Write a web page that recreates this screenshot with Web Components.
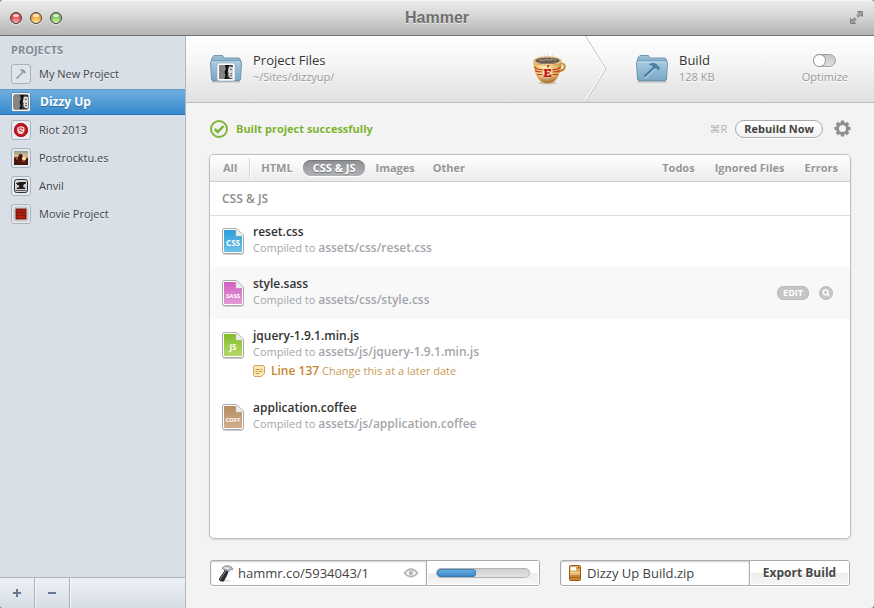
<!DOCTYPE html>
<html lang="en">
<head>
<meta charset="utf-8">
<title>Hammer</title>
<style>
  html, body { height: 100%; }
  body {
    margin: 0;
    background: #8d8d8d;
    font-family: "Open Sans", "Noto Sans", sans-serif;
    font-size: 11px;
    line-height: 16px;
    color: #444;
  }
</style>
</head>
<body>
<hammer-app></hammer-app>

<script>
const RESET = `
  *, *::before, *::after { box-sizing: border-box; }
  button, input { font: inherit; color: inherit; margin: 0; padding: 0; border: 0; background: none; outline: none; }
  button { cursor: pointer; }
  svg { display: block; flex: none; }
`;

function define(name, html, setup) {
  const template = document.createElement('template');
  template.innerHTML = html.replace('<style>', '<style>' + RESET);
  customElements.define(name, class extends HTMLElement {
    constructor() {
      super();
      this.attachShadow({ mode: 'open' }).append(template.content.cloneNode(true));
    }
    connectedCallback() { if (setup) setup(this, this.shadowRoot); }
  });
}

const portrait = `
  <rect x="0" y="0" width="14" height="14" rx="1" fill="#3b3b3b"/>
  <rect x="0" y="0" width="7" height="14" fill="#858585"/>
  <path d="M6 0h4L8.500 3l1 2-1.500 2 .5 2L7.500 11l1 3H5.500l1-4-1-3 1.500-3z" fill="#0c0c0c"/>
  <path d="M10.500 1.500C9 3 9.500 5 8.800 7l.9 1-.4 2.500 1.700 2.500 3 .5V2z" fill="#d9d9d9"/>
  <path d="M11 4.500l2-.4M11.500 8.500l1.500.2M11 10.500l2 .3" stroke="#4a4a4a" stroke-width=".9" fill="none"/>`;

const icons = {
  hammer: `
    <svg width="20" height="20" viewBox="0 0 20 20">
      <rect x=".5" y=".5" width="19" height="19" rx="2.500" fill="#dfe5eb" stroke="#a9b3be"/>
      <path d="M5.500 14.500L12.300 7.700" stroke="#8496a8" stroke-width="1.400" fill="none"/>
      <path d="M8.500 5.800c1.500-.9 3.200-.9 4.600.2l2 2.400-1.200 1.100-1.200-1.300-1.200.2-1-1.300c-.6-.6-1.300-.9-2-1z" fill="#8496a8"/>
    </svg>`,
  portrait: `
    <svg width="20" height="20" viewBox="0 0 20 20">
      <rect x=".5" y=".5" width="19" height="19" rx="2.500" fill="#f3f3f3" stroke="#5b8cb5"/>
      <rect x="1" y="1" width="18" height="18" rx="2" fill="#f6f6f6"/>
      <rect x="2.500" y="2.500" width="15" height="15" rx="1.500" fill="#222"/>
      <g transform="translate(3 3)">${portrait}</g>
    </svg>`,
  riot: `
    <svg width="20" height="20" viewBox="0 0 20 20">
      <rect x=".5" y=".5" width="19" height="19" rx="2.500" fill="#e8ecf0" stroke="#a9b3be"/>
      <circle cx="10" cy="10" r="7" fill="#c41623"/>
      <circle cx="10" cy="10" r="6.500" fill="none" stroke="#9a0d19" stroke-width=".8"/>
      <path d="M7.500 13.500l-1.300-2.300V8l1-1h1.200l.6-.8h1.600l.6.6h1.300l1 1.200v2.800l-1.500 2.700-2 .8z" fill="#f3dcdc"/>
      <path d="M8.200 7.500v1.800M10 7.200v2M11.700 8l-.2 1.500M8 10.700h2.200l1.300 1.300" stroke="#c41623" stroke-width="1" fill="none"/>
    </svg>`,
  sunset: `
    <svg width="20" height="20" viewBox="0 0 20 20">
      <defs><linearGradient id="s" x1="0" x2="0" y1="0" y2="1">
        <stop offset="0" stop-color="#8d968f"/><stop offset=".35" stop-color="#d8c29a"/>
        <stop offset=".6" stop-color="#a14a28"/><stop offset="1" stop-color="#2b0d09"/>
      </linearGradient></defs>
      <rect x=".5" y=".5" width="19" height="19" rx="2.500" fill="#e3e8ed" stroke="#a9b3be"/>
      <rect x="3" y="3" width="14" height="14" rx="1" fill="url(#s)"/>
      <path d="M3 10l2-1 2 1.500V9l1.500-3 2.500.2L12 9.500l1 1.500 4-1V17H3z" fill="#4a170f"/>
      <circle cx="13" cy="10.500" r="2" fill="#ffe3a8"/>
      <path d="M4.500 11l1.500-1 1 2zM9.500 14l3-1.500 2.500.500z" fill="#d9763f"/>
    </svg>`,
  anvil: `
    <svg width="20" height="20" viewBox="0 0 20 20">
      <rect x=".5" y=".5" width="19" height="19" rx="2.500" fill="#e8ecf0" stroke="#a9b3be"/>
      <rect x="3.500" y="3.500" width="13" height="13" rx="2" fill="#d6d6d6" stroke="#2f2f2f"/>
      <path d="M5 6.700h2.500V6h7.500v1.500c-1 .2-2 .6-2.500 1.500-.4 1-.3 1.700.3 2.500h1.400V13H5.800v-1.500h1.800c.7-.8.700-1.400.4-2C6.500 9.200 5.300 8.200 5 6.700z" fill="#1c1c1c"/>
      <path d="M4.500 14.500h11" stroke="#555"/>
    </svg>`,
  movie: `
    <svg width="20" height="20" viewBox="0 0 20 20">
      <rect x=".5" y=".5" width="19" height="19" rx="2.500" fill="#e8ecf0" stroke="#a9b3be"/>
      <rect x="3" y="3" width="14" height="14" rx="2" fill="#e9e6e4" stroke="#a5a9ae" stroke-width=".7"/>
      <rect x="5" y="5" width="10" height="10" fill="#b32210" stroke="#651108"/>
      <path d="M5 8.500h10M5 11.500h10M9.500 5v3.500M11.500 8.500v3" stroke="#7b1409" stroke-width=".8"/>
    </svg>`
};

const folder = inner => `
  <svg width="34" height="30" viewBox="0 0 34 30">
    <defs>
      <linearGradient id="f" x1="0" x2="0" y1="0" y2="1"><stop offset="0" stop-color="#a9cbe0"/><stop offset="1" stop-color="#77a7c6"/></linearGradient>
      <linearGradient id="b" x1="0" x2="0" y1="0" y2="1"><stop offset="0" stop-color="#9ec2d8"/><stop offset="1" stop-color="#7fa9c4"/></linearGradient>
    </defs>
    <path d="M3 27.800h28" stroke="#b5b9bc" stroke-width="1.500"/>
    <path d="M2.500 9V5L4 2.500 5 1.500h8.500l1.700 2.500H30l1.500 1.500V9z" fill="url(#b)" stroke="#7199b3"/>
    <path d="M1.500 8.500q0-1.500 1.500-1.500h28q1.500 0 1.500 1.500l-1 16.500q0 1.500-1.500 1.500H4Q2.500 26.500 2.500 25z" fill="url(#f)" stroke="#6b96b3"/>
    <path d="M3 8h28" stroke="#c7e0ef"/>
    ${inner}
  </svg>`;

/* ---------- title bar ---------- */
define('title-bar', `
<style>
  :host {
    display: grid; grid-template-columns: 1fr auto 1fr; align-items: center;
    height: 36px; padding: 0 10px; flex: none;
    background: linear-gradient(#ececec, #d6d6d6 45%, #b4b4b4);
    border-bottom: 1px solid #737373; box-shadow: inset 0 1px #f6f6f6;
    border-radius: 4px 4px 0 0;
  }
  .lights { display: flex; gap: 8px; }
  .lights button {
    width: 12px; height: 12px; border-radius: 50%;
    border: 1px solid; box-shadow: 0 1px rgba(255,255,255,.5);
  }
  .close { border-color: #8e2427; background: radial-gradient(circle at 50% 95%, #ffb3ae, #e5474b 60%, #c9383d); }
  .min { border-color: #946022; background: radial-gradient(circle at 50% 95%, #ffe79a, #f2a840 60%, #dd8e2d); }
  .zoom { border-color: #41752e; background: radial-gradient(circle at 50% 95%, #d2f7ae, #7cc45c 60%, #5fa845); }
  .lights button::after {
    content: ""; display: block; width: 6px; height: 3px; margin: 0 auto 5px;
    border-radius: 50%; background: rgba(255,255,255,.75);
  }
  h1 { margin: 0; font: bold 16px/20px "Liberation Sans", Arial, sans-serif; color: #6f6f6f; text-shadow: 0 1px rgba(255,255,255,.6); }
  .full { justify-self: end; }
</style>
<div class="lights">
  <button class="close" aria-label="Close"></button>
  <button class="min" aria-label="Minimize"></button>
  <button class="zoom" aria-label="Zoom"></button>
</div>
<h1><slot></slot></h1>
<button class="full" aria-label="Full screen">
  <svg width="15" height="15" viewBox="0 0 15 15">
    <path d="M8.500 1.500h5v5l-1.700-1.700L9.500 7.200 7.800 5.500l2.400-2.300zM1.500 8.500l1.700 1.700L5.500 7.800l1.700 1.700-2.400 2.300 1.700 1.700h-5z" fill="#a0a0a0" stroke="#808080"/>
  </svg>
</button>`);

/* ---------- sidebar ---------- */
define('project-item', `
<style>
  :host { display: block; }
  button {
    display: flex; align-items: center; gap: 8px; width: 100%; height: 28px;
    padding: 0 11px; text-align: left; color: #3f4348; text-shadow: 0 1px rgba(255,255,255,.5);
  }
  :host([selected]) button {
    height: 26px; margin: 1px 0; font-weight: 700; font-size: 12px; color: #fff; gap: 9px;
    text-shadow: 0 1px rgba(0,0,0,.3);
    background: linear-gradient(#72b1e0, #3487cb);
    box-shadow: inset 0 1px #5f9ac6, inset 0 -1px #2c74b3;
  }
</style>
<button><span class="icon"></span><span><slot></slot></span></button>`,
(host, root) => { root.querySelector('.icon').innerHTML = icons[host.getAttribute('icon')]; });

define('project-sidebar', `
<style>
  :host {
    display: flex; flex-direction: column; width: 186px; flex: none;
    background: #d8dfe7; border-right: 1px solid #b0b7bf;
  }
  h2 { margin: 0; padding: 6px 11px 2px; font-size: 11px; line-height: 16px; font-weight: 700; color: #808992; text-shadow: 0 1px rgba(255,255,255,.6); }
  nav { flex: 1; }
  footer {
    display: flex; height: 31px; border-top: 1px solid #a9b3bf;
    background: linear-gradient(#eef1f4, #d7dde6);
  }
  footer button { display: grid; place-items: center; width: 35px; border-right: 1px solid #a9b3bf; color: #66788d; box-shadow: 1px 0 rgba(255,255,255,.6); }
</style>
<h2>PROJECTS</h2>
<nav><slot></slot></nav>
<footer>
  <button aria-label="Add project"><svg width="10" height="10" viewBox="0 0 10 10"><path d="M1 5h8M5 1v8" stroke="currentColor" stroke-width="2"/></svg></button>
  <button aria-label="Remove project"><svg width="10" height="10" viewBox="0 0 10 10"><path d="M1 5h8" stroke="currentColor" stroke-width="2"/></svg></button>
</footer>`);

/* ---------- source / build header ---------- */
define('stage-info', `
<style>
  :host { display: flex; align-items: center; gap: 10px; }
  div { padding-bottom: 2px; }
  h2 { margin: 0; font-size: 13px; line-height: 17px; font-weight: 400; color: #333; text-shadow: 0 1px #fff; }
  p { margin: 0; font-size: 11px; line-height: 16px; color: #999; text-shadow: 0 1px #fff; }
</style>
<slot name="icon"></slot>
<div><h2><slot></slot></h2><p><slot name="detail"></slot></p></div>`);

define('optimize-switch', `
<style>
  :host { display: block; }
  label { display: flex; flex-direction: column; align-items: center; color: #999; text-shadow: 0 1px #fff; cursor: pointer; }
  input {
    appearance: none; width: 23px; height: 13px; border-radius: 7px; margin: 2px 0;
    border: 1px solid #a0a0a0; background: linear-gradient(#c7c7c7, #dedede); box-shadow: 0 1px #fff;
  }
  input::before { content: ""; display: block; width: 11px; height: 11px; border-radius: 50%; background: #fdfdfd; box-shadow: 0 0 0 1px #999; }
  input:checked::before { margin-left: 10px; }
  span { padding-bottom: 1px; }
</style>
<label for="opt"><input type="checkbox" id="opt"><span>Optimize</span></label>`);

define('build-header', `
<style>
  :host {
    display: flex; align-items: stretch; height: 67px; flex: none;
    background: linear-gradient(#fff, #f4f4f4 45%, #e0e0e0); border-bottom: 1px solid #bcbcbc;
  }
  .stage { display: flex; align-items: center; justify-content: space-between; }
  .source { flex: 1; padding: 0 19px 0 23px; }
  .build { flex: 0 0 267px; padding: 0 26px 0 28px; }
</style>
<div class="stage source">
  <stage-info>
    <span slot="icon">${folder(`
      <rect x="8" y="9" width="18" height="18" rx="2" fill="#fff" stroke="#9aa7b0" stroke-width=".7"/>
      <g transform="translate(10 11)">${portrait}</g>`)}</span>
    Project Files
    <span slot="detail">~/Sites/dizzyup/</span>
  </stage-info>
  <svg width="34" height="34" viewBox="0 0 34 34">
    <defs>
      <linearGradient id="cup" x1="0" x2="1"><stop offset="0" stop-color="#e0a54c"/><stop offset=".25" stop-color="#fbe29a"/><stop offset=".5" stop-color="#fff0b0"/><stop offset="1" stop-color="#cf8f3a"/></linearGradient>
      <linearGradient id="low" x1="0" x2="0" y1="0" y2="1"><stop offset=".6" stop-color="#94490f" stop-opacity="0"/><stop offset="1" stop-color="#94490f" stop-opacity=".85"/></linearGradient>
    </defs>
    <path d="M29 12.500c4-1.500 4.500 3 2 5.200-1.200 1-2.500 1.300-4 1.300" fill="none" stroke="#c08434" stroke-width="2.400"/>
    <path d="M29 12.500c3.500-1 3.800 2.800 1.500 4.500" fill="none" stroke="#f6d68a" stroke-width="1"/>
    <ellipse cx="15.500" cy="31" rx="9" ry="1.500" fill="#a98b68" opacity=".45"/>
    <path d="M1.500 8.500C1.500 18 4 25 9 29.500q6.500 3.500 13 0C27 25 29.500 18 29.500 8.500z" fill="url(#cup)"/>
    <path d="M1.500 8.500C1.500 18 4 25 9 29.500q6.500 3.500 13 0C27 25 29.500 18 29.500 8.500z" fill="url(#low)"/>
    <ellipse cx="15.500" cy="9" rx="14" ry="4.300" fill="#fbe4aa" stroke="#cf9648" stroke-width=".7"/>
    <ellipse cx="15.500" cy="8.800" rx="12.300" ry="3.300" fill="#6b5a4e"/>
    <path d="M5 10c4 2.200 16 2.200 21 0" stroke="#9c8266" stroke-width="1" fill="none"/>
    <path d="M7 8.500c2-1.500 4 1 6-.5s4 1.200 6-.3 3 .8 5 .3" stroke="#b3a89d" stroke-width="1" fill="none"/>
    <path d="M12 6c-3-1.500 1.500-2 0-4M16 5.500c-3-1.500 1.500-2.500 0-4.500M20 6c-2-1.500 1.500-2 .3-4" stroke="#dedad6" stroke-width="1" fill="none"/>
    <path d="M2.200 15.200l3 1.800 5.300.8M3.200 18.500l2.300 1.200 5 .3M5 22.500h5.500M28.800 15.200l-3 1.800-5.300.8M27.800 18.500l-2.300 1.200-5 .3M26 22.500h-5.500" stroke="#bb3a24" stroke-width="1.200" fill="none"/>
    <path d="M11.500 17h7.500v2.500h-1.500l-.5-.8h-2v1.500h2.500v1.600H15v1.700h2l.7-1h1.600V25h-7.800v-1.500h1v-5h-1zM14.800 15.500l1-2.500h1.700l-1.200 2.500z" fill="#c1202a"/>
  </svg>
</div>
<svg width="22" height="66" viewBox="0 0 22 66">
  <path d="M-.5 0L20.500 33-.5 66" fill="none" stroke="#fff" stroke-width="1.500"/>
  <path d="M.5 0L21 33 .5 66" fill="none" stroke="#c4c4c4"/>
</svg>
<div class="stage build">
  <stage-info>
    <span slot="icon">${folder(`
      <path d="M10 23L21 12.500" stroke="#b4d3e6" stroke-width="2" fill="none" transform="translate(0 1)"/>
      <path d="M9.500 22.500L20.500 12" stroke="#4d7d9f" stroke-width="2.400" fill="none"/>
      <path d="M14 10c2.800-1.400 5.800-1.200 7.800.4l3.400 3.800-2 2-1.800-1.900-1.900.2-1.700-2c-1-1.100-2.200-1.700-3.800-1.800z" fill="#4d7d9f"/>`)}</span>
    Build
    <span slot="detail">128 KB</span>
  </stage-info>
  <optimize-switch></optimize-switch>
</div>`);

/* ---------- status line ---------- */
define('build-status', `
<style>
  :host { display: flex; align-items: center; justify-content: space-between; height: 51px; flex: none; }
  .ok, .actions { display: flex; align-items: center; }
  .ok { gap: 7px; font-weight: 700; color: #7bb131; text-shadow: 0 1px #fff; }
  .ok svg { margin-top: 1px; }
  .actions { gap: 8px; }
  kbd { font: 11px "Open Sans", "DejaVu Sans", sans-serif; color: #b5b5b5; }
  .rebuild {
    height: 18px; padding: 0 8px; border-radius: 9px; border: 1px solid #aaa; font-size: 11px; line-height: 16px; font-weight: 700; color: #444;
    background: linear-gradient(#fff, #f3f3f3); box-shadow: 0 1px #fff;
  }
  .gear { margin-left: 3px; }
</style>
<div class="ok">
  <svg width="20" height="20" viewBox="0 0 20 20"><circle cx="10" cy="10" r="8" fill="none" stroke="#7fb437" stroke-width="2"/><path d="M5.700 10l3 3 5.800-5.800" fill="none" stroke="#7fb437" stroke-width="2.500"/></svg>
  <span role="status">Built project successfully</span>
</div>
<div class="actions">
  <kbd>⌘R</kbd>
  <button class="rebuild">Rebuild Now</button>
  <button class="gear" aria-label="Settings"></button>
</div>`,
(host, root) => {
  let teeth = '';
  for (let i = 0; i < 8; i++) teeth += `<path d="M6.300 3.500L7 .5h3l.7 3z" transform="rotate(${i * 45} 8.500 8.500)"/>`;
  root.querySelector('.gear').innerHTML =
    `<svg width="17" height="17" viewBox="0 0 17 17" fill="#8e8e8e">${teeth}<circle cx="8.500" cy="8.500" r="4.700" fill="none" stroke="#8e8e8e" stroke-width="2.400"/></svg>`;
});

/* ---------- file list ---------- */
const fileColors = {
  CSS: ['#2b9fd6', '#6cc3ea'], SASS: ['#d060bd', '#e59ada'],
  JS: ['#84bb27', '#b3d96a'], COFF: ['#b58c63', '#d0af8d']
};

define('file-badge', `
<style>
  :host { display: block; width: 22px; height: 27px; }
  text { font-family: "Open Sans", sans-serif; font-weight: 700; fill: #fff; text-anchor: middle; }
</style>
<svg width="22" height="27" viewBox="0 0 22 27">
  <defs><linearGradient id="g" x1="0" x2="0" y1="0" y2="1"><stop offset="0"/><stop offset="1"/></linearGradient></defs>
  <path d="M1 3Q1 1.500 2.500 1.500H15L21 7.500V25q0 1.500-1.500 1.500h-17Q1 26.500 1 25z" fill="none" stroke="#ccc"/>
  <path d="M.5 2.500Q.5.500 2.500.500H14.500L21.500 7V23.500q0 2-2 2h-17q-2 0-2-2z" fill="#fff" stroke="#aaa"/>
  <path d="M2 2h12v6h6v16H2z" fill="url(#g)"/>
  <path d="M14 1.500V8h6.500z" fill="#eee" stroke="#ccc" stroke-width=".5"/>
  <text x="11" y="18"></text>
</svg>`,
(host, root) => {
  const type = host.getAttribute('type');
  const stops = root.querySelectorAll('stop');
  fileColors[type].forEach((c, i) => stops[i].setAttribute('stop-color', c));
  const text = root.querySelector('text');
  text.textContent = type;
  text.setAttribute('font-size', type.length > 3 ? 6 : 8);
});

define('file-row', `
<style>
  :host { display: flex; align-items: flex-start; gap: 9px; padding: 8px 17px 11px 12px; }
  :host([hovered]) { background: #f8f8f8; }
  .badge { flex: none; padding-top: 5px; }
  .text { flex: 1; min-width: 0; }
  h4 { margin: 0; font-size: 12px; line-height: 17px; font-weight: 600; color: #333; }
  p { margin: 0; line-height: 16px; color: #a3a5ab; }
  .out { font-size: 12px; font-weight: 600; }
  .tools { display: flex; gap: 10px; align-self: center; align-items: center; padding-top: 2px; }
  .edit { height: 14px; padding: 0 6px; border-radius: 7px; background: #c6c6c6; box-shadow: inset 0 0 0 1px #b9b9b9; color: #fff; font-size: 9px; line-height: 14px; font-weight: 700; }
</style>
<div class="badge"></div>
<div class="text">
  <h4></h4>
  <p>Compiled to <span class="out"></span></p>
  <slot></slot>
</div>
<div class="tools">
  <button class="edit">EDIT</button>
  <button aria-label="Preview"><svg width="14" height="14" viewBox="0 0 14 14"><circle cx="7" cy="7" r="6.500" fill="#c6c6c6" stroke="#b9b9b9"/><circle cx="6.500" cy="6.300" r="2.400" fill="none" stroke="#fff" stroke-width="1.500"/><path d="M8.200 8l2 2.200" stroke="#fff" stroke-width="1.700"/></svg></button>
</div>`,
(host, root) => {
  const badge = document.createElement('file-badge');
  badge.setAttribute('type', host.getAttribute('type'));
  root.querySelector('.badge').replaceChildren(badge);
  root.querySelector('h4').textContent = host.getAttribute('name');
  root.querySelector('.out').textContent = host.getAttribute('output');
  if (!host.hasAttribute('hovered')) root.querySelector('.tools').remove();
});

define('todo-note', `
<style>
  :host { display: flex; align-items: center; gap: 6px; height: 18px; margin-top: 2px; color: #cb9a55; }
  b { font-size: 12px; font-weight: 600; color: #c4872f; }
</style>
<svg width="12" height="12" viewBox="0 0 12 12">
  <path d="M1.500.500h9l1 1v7l-3 3h-7l-1-1v-9z" fill="#fbe7b7" stroke="#d6a455"/>
  <path d="M2.500 4.500h4M7.500 4.500h2M2.500 6.500h2M5.500 6.500h4M2.500 8.500h4" stroke="#cf9a46"/>
</svg>
<span><b><slot name="line"></slot></b> <slot></slot></span>`);

define('file-panel', `
<style>
  :host {
    display: flex; flex-direction: column; flex: 1; min-height: 0; overflow: hidden;
    background: #fff; border: 1px solid #bfbfbf; border-radius: 5px; box-shadow: 0 1px 2px rgba(0,0,0,.12);
  }
  .tabs {
    display: flex; align-items: center; height: 27px; padding: 0 2px 0 4px;
    background: linear-gradient(#fff, #ebebeb); border-bottom: 1px solid #ccc;
    font-weight: 700; color: #959595;
  }
  .tabs button { height: 16px; line-height: 16px; padding: 0 8px; border-radius: 8px; text-shadow: 0 1px #fff; margin-right: 2px; }
  .tabs .all { padding-left: 9px; margin-right: 4px; }
  .rule { width: 1px; height: 20px; background: #d4d4d4; box-shadow: 1px 0 #fff; margin-right: 3px; }
  .tabs .on { padding: 0 10px; color: #fff; background: linear-gradient(#8f9093, #b0b1b4); box-shadow: inset 0 1px 1px #77787b, 0 1px #fff; text-shadow: 0 1px #77787b; }
  .space { flex: 1; }
  .issues { display: flex; gap: 2px; }
  h3 { margin: 0; height: 33px; padding: 0 12px; line-height: 33px; font-size: 12px; font-weight: 600; color: #8d8d8d; box-shadow: 0 1px #dcdcdc; }
  .list { flex: 1; overflow: hidden; margin-top: 1px; }
  ::slotted(file-row:first-child) { padding-top: 7px; }
</style>
<div class="tabs">
  <button class="all">All</button><span class="rule"></span>
  <button>HTML</button><button class="on" aria-pressed="true">CSS &amp; JS</button><button>Images</button><button>Other</button>
  <span class="space"></span>
  <div class="issues"><button>Todos</button><button>Ignored Files</button><button>Errors</button></div>
</div>
<h3>CSS &amp; JS</h3>
<div class="list"><slot></slot></div>`);

/* ---------- bottom bar ---------- */
define('field-group', `
<style>
  :host { display: flex; height: 26px; border: 1px solid #ababab; border-radius: 3px; background: #fff; overflow: hidden; box-shadow: 0 1px #fff; }
  .field { flex: 1; min-width: 0; display: flex; align-items: center; gap: 5px; padding: 0 7px; box-shadow: inset 0 1px 2px rgba(0,0,0,.2); }
  input { flex: 1; min-width: 0; width: 0; font-size: 13px; line-height: 18px; color: #444; }
  .end { display: flex; border-left: 1px solid #ababab; background: linear-gradient(#fff 50%, #ededed 50%, #f6f6f6); box-shadow: inset 0 0 0 1px #fff; }
</style>
<div class="field"><slot name="icon"></slot><input type="text"><slot name="action"></slot></div>
<div class="end"><slot></slot></div>`,
(host, root) => {
  const input = root.querySelector('input');
  input.value = host.getAttribute('value');
  input.setAttribute('aria-label', host.getAttribute('label'));
});

define('publish-bar', `
<style>
  :host { display: flex; justify-content: space-between; flex: none; gap: 20px; padding: 21px 1px 22px; }
  .share { flex: 0 1 330px; }
  .export { flex: 0 1 290px; }
  progress { appearance: none; width: 92px; height: 8px; margin: 8px 10px; border: 0; border-radius: 4px; overflow: hidden; box-shadow: 0 0 0 1px #b3b3b3; background: #dcdcdc; }
  progress::-webkit-progress-bar { background: linear-gradient(#cecece, #e4e4e4); border-radius: 4px; }
  progress::-webkit-progress-value { background: linear-gradient(#6fb3e3, #3883c4); border-radius: 4px; box-shadow: inset 0 0 0 1px #3a7fb8; }
  .save { width: 99px; font-size: 12px; font-weight: 700; color: #484848; text-shadow: 0 1px #fff; }
</style>
<field-group class="share" label="Share address" value="hammr.co/5934043/1">
  <svg slot="icon" width="15" height="17" viewBox="0 0 15 17">
    <path d="M5 16.500h8l-3-1.500H6z" fill="#dcdcdc"/>
    <path d="M.8 14.500C2 11 5 9 6.500 5l4 1.500C9.500 10.500 7.500 13 6 16.300Q2.500 17.500.8 14.500z" fill="#2b2f34"/>
    <path d="M2.300 14.500C3.500 11.500 6 9.500 7.500 6" stroke="#88929c" stroke-width="1" fill="none"/>
    <path d="M4 3.200C6 .8 9 .2 11.300 1L14 2.500l.7 2.300-2-.5-1.500 2-4-1.600-1.700-.2z" fill="#c3c7ca" stroke="#63696e" stroke-width=".7"/>
    <path d="M6.500 2.800l4 .7" stroke="#fff"/>
  </svg>
  <button slot="action" aria-label="Preview site"><svg width="16" height="12" viewBox="0 0 16 12"><path d="M1.500 6Q8-1.500 14.500 6 8 13.500 1.500 6z" fill="none" stroke="#b7b7b7" stroke-width="1.800"/><circle cx="8" cy="6" r="2.300" fill="#b7b7b7"/></svg></button>
  <progress value="42" max="100" aria-label="Upload"></progress>
</field-group>
<field-group class="export" label="Export file name" value="Dizzy Up Build.zip">
  <svg slot="icon" width="14" height="16" viewBox="0 0 14 16">
    <rect x="1.500" y=".5" width="11" height="15" rx="1" fill="#c88832" stroke="#95591a"/>
    <path d="M2 1h10v6H2z" fill="#dfae59"/><path d="M2.500 2h5.500v3.500H2.500z" fill="#fff"/><path d="M9.500 2h2v1.500h-2z" fill="#8b5b1c"/>
    <path d="M2 7h10v2.500H2z" fill="#fbe8bd"/><path d="M2 8.300h10" stroke="#c89b53" stroke-width=".8"/><path d="M2 12.500h10" stroke="#a9681f"/>
  </svg>
  <button class="save">Export Build</button>
</field-group>`);

/* ---------- window ---------- */
define('hammer-app', `
<style>
  :host { display: flex; flex-direction: column; height: 100vh; overflow: hidden; border-radius: 4px; background: #f3f3f3; }
  .body { flex: 1; display: flex; min-height: 0; }
  main { flex: 1; min-width: 0; display: flex; flex-direction: column; }
  .content { flex: 1; min-height: 0; display: flex; flex-direction: column; padding: 0 23px; }
</style>
<title-bar>Hammer</title-bar>
<div class="body">
  <project-sidebar>
    <project-item icon="hammer">My New Project</project-item>
    <project-item icon="portrait" selected>Dizzy Up</project-item>
    <project-item icon="riot">Riot 2013</project-item>
    <project-item icon="sunset">Postrocktu.es</project-item>
    <project-item icon="anvil">Anvil</project-item>
    <project-item icon="movie">Movie Project</project-item>
  </project-sidebar>
  <main>
    <build-header></build-header>
    <div class="content">
      <build-status></build-status>
      <file-panel>
        <file-row type="CSS" name="reset.css" output="assets/css/reset.css"></file-row>
        <file-row type="SASS" name="style.sass" output="assets/css/style.css" hovered></file-row>
        <file-row type="JS" name="jquery-1.9.1.min.js" output="assets/js/jquery-1.9.1.min.js">
          <todo-note><span slot="line">Line 137</span>Change this at a later date</todo-note>
        </file-row>
        <file-row type="COFF" name="application.coffee" output="assets/js/application.coffee"></file-row>
      </file-panel>
      <publish-bar></publish-bar>
    </div>
  </main>
</div>`);
</script>
</body>
</html>
